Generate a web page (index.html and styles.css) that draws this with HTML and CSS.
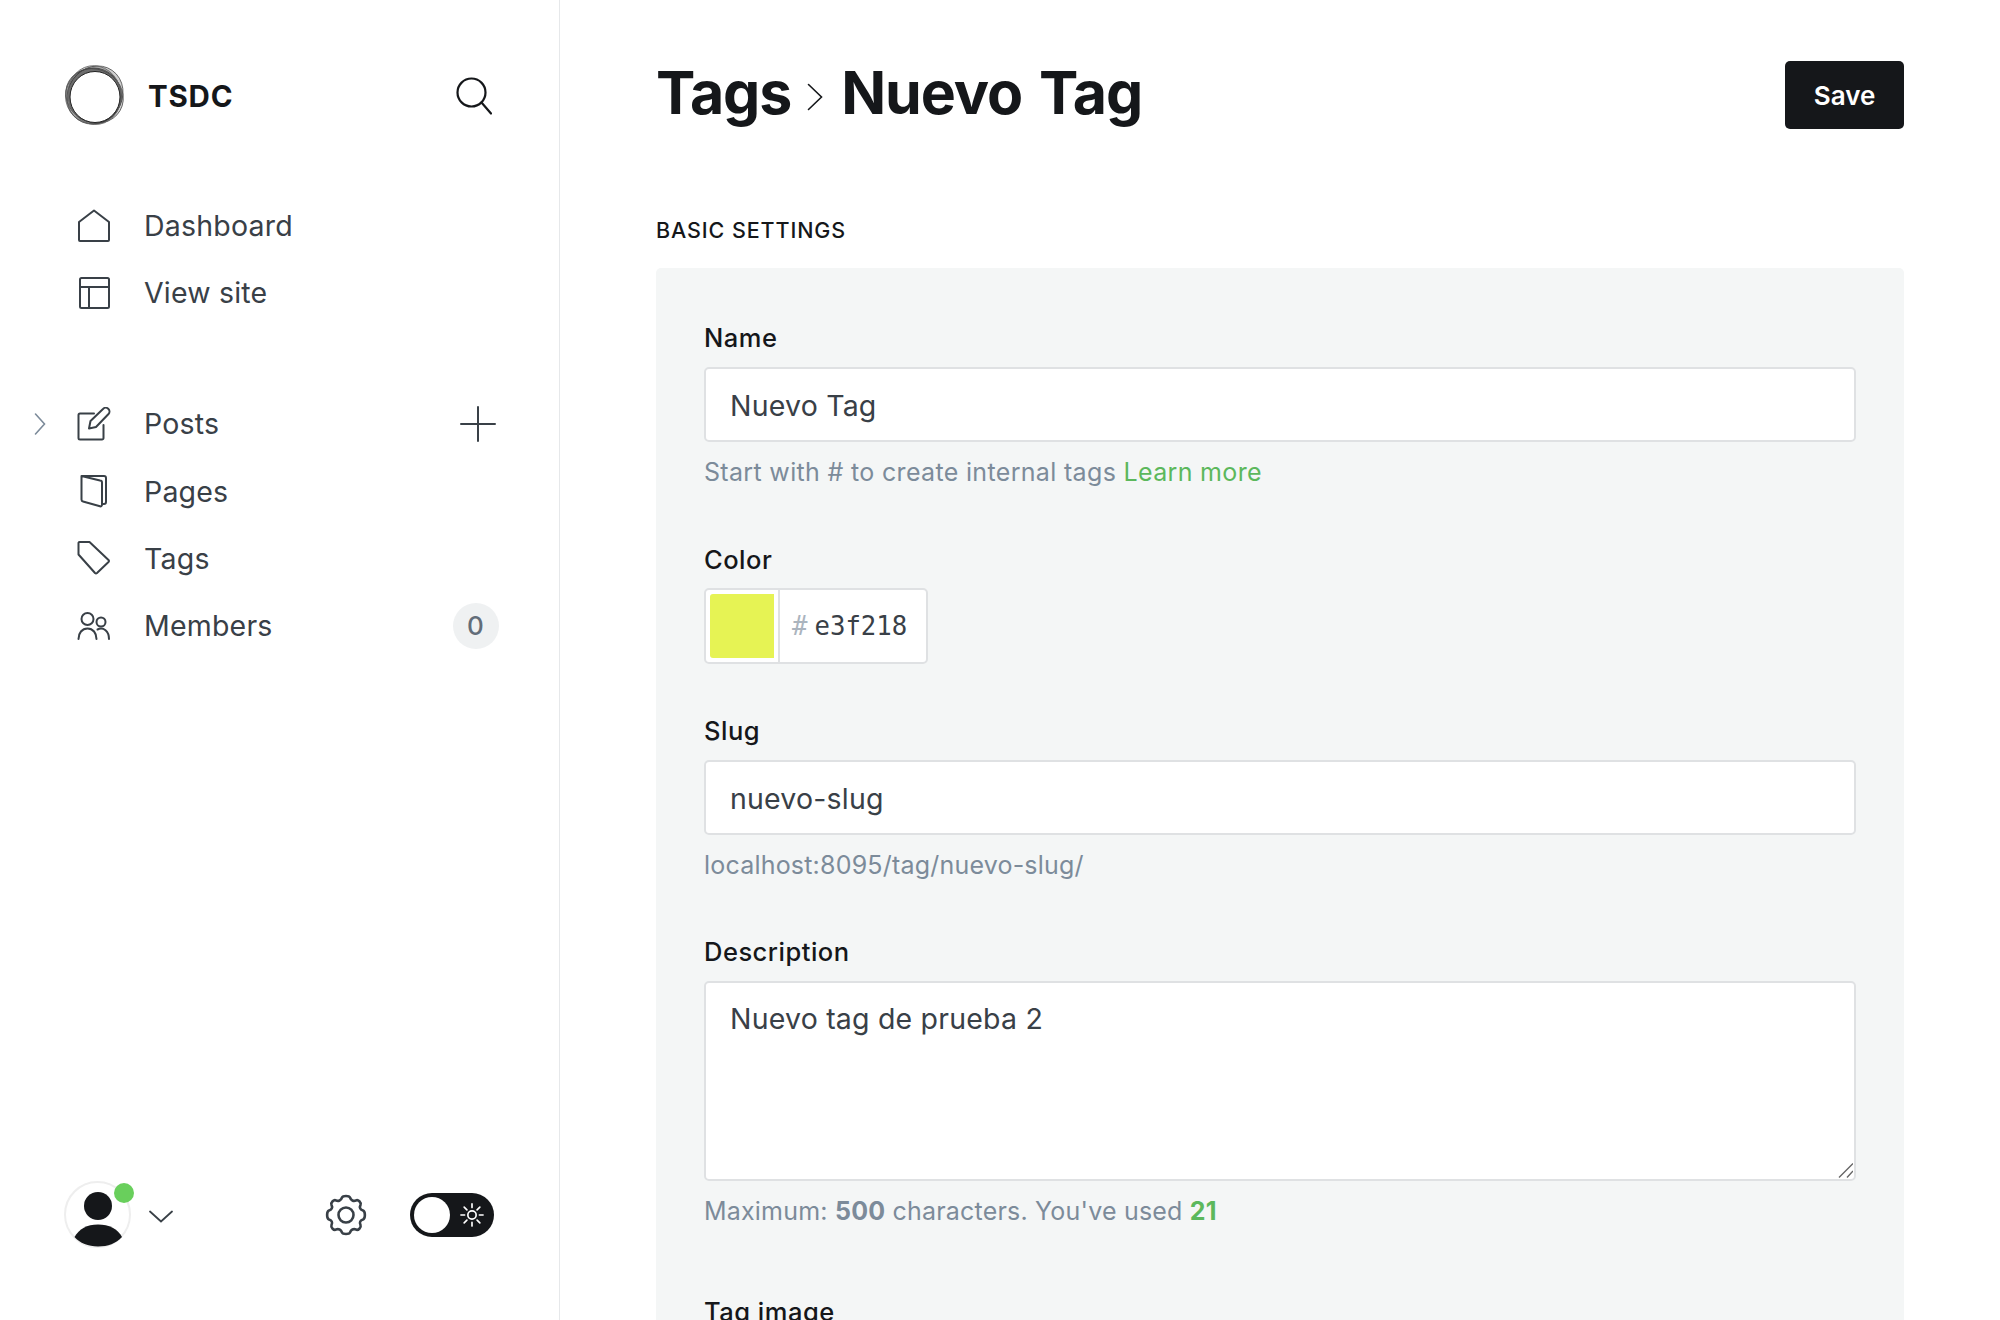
FILE: index.html
```html
<!DOCTYPE html>
<html>
<head>
<meta charset="UTF-8" />
<title>Tags - Nuevo Tag</title>
<link rel="stylesheet" href="styles.css">
</head>
<body>
<div class="app">
	<aside class="sidebar">
		<div class="brand">
			<svg class="logo" viewBox="0 0 60 60" fill="none">
				<ellipse cx="28.500" cy="31" rx="28" ry="28" fill="#000" fill-opacity="0.22" stroke="#555" stroke-width="0.8"/>
				<ellipse cx="30" cy="30" rx="30" ry="27" transform="rotate(-55 30 30)" fill="#000" fill-opacity="0.18" stroke="#555" stroke-width="0.8"/>
				<ellipse cx="30" cy="31" rx="29.500" ry="26.500" transform="rotate(30 30 30)" fill="#000" fill-opacity="0.18" stroke="#555" stroke-width="0.8"/>
				<ellipse cx="30" cy="30.500" rx="29.500" ry="26.500" transform="rotate(80 30 30)" fill="#000" fill-opacity="0.18" stroke="#666" stroke-width="0.8"/>
				<ellipse cx="30" cy="32" rx="25" ry="25.500" fill="#fff" stroke="#222" stroke-width="1"/>
			</svg>
			<span class="brand-name">TSDC</span>
			<svg class="search-icon" viewBox="0 0 36 38" fill="none" stroke="#15171a" stroke-width="2.2" stroke-linecap="round">
				<circle cx="15.5" cy="15.5" r="14"/>
				<path d="M25.5 25.5 L35 36.5"/>
			</svg>
		</div>

		<nav class="nav nav-top">
			<a class="nav-item">
				<svg class="nav-icon" viewBox="0 0 34 34" fill="none" stroke="#394047" stroke-width="2" stroke-linejoin="round">
					<path d="M2 13 L17 1.500 L32 13 V31 a1 1 0 0 1 -1 1 H3 a1 1 0 0 1 -1 -1 Z"/>
				</svg>
				<span>Dashboard</span>
			</a>
			<a class="nav-item">
				<svg class="nav-icon" viewBox="0 0 34 34" fill="none" stroke="#394047" stroke-width="2" stroke-linejoin="round">
					<rect x="3" y="2" width="29" height="30" rx="1.5"/>
					<path d="M3 11 H32 M12 11 V32"/>
				</svg>
				<span>View site</span>
			</a>
		</nav>

		<nav class="nav nav-main">
			<a class="nav-item">
				<svg class="nav-caret" viewBox="0 0 12 24" fill="none" stroke="#7c8b9a" stroke-width="1.6" stroke-linecap="round">
					<path d="M1.5 2 L10.5 12 L1.5 22"/>
				</svg>
				<svg class="nav-icon" viewBox="0 0 34 34" fill="none" stroke="#394047" stroke-width="2" stroke-linejoin="round" stroke-linecap="round">
					<path d="M17 6.5 H3 a1.5 1.5 0 0 0 -1.5 1.5 V31 a1.5 1.5 0 0 0 1.5 1.5 H25 a1.5 1.5 0 0 0 1.5 -1.5 V18"/>
					<path d="M12 21.5 L13.5 14 L26 2 a3 3 0 0 1 5.5 5 L19 20 Z"/>
				</svg>
				<span>Posts</span>
				<svg class="nav-plus" viewBox="0 0 36 36" fill="none" stroke="#394047" stroke-width="2" stroke-linecap="round">
					<path d="M18 1 V35 M1 18 H35"/>
				</svg>
			</a>
			<a class="nav-item">
				<svg class="nav-icon" viewBox="0 0 34 34" fill="none" stroke="#394047" stroke-width="2" stroke-linejoin="round">
					<path d="M5 2 H27 a2 2 0 0 1 2 2 V28 a2 2 0 0 1 -2 2 H25"/>
					<path d="M4.5 2 L23 6.5 a2 2 0 0 1 2 2 V31 a1.5 1.5 0 0 1 -2 1.3 L6 27.5 a2 2 0 0 1 -1.5 -2 Z"/>
				</svg>
				<span>Pages</span>
			</a>
			<a class="nav-item">
				<svg class="nav-icon" viewBox="0 0 34 34" fill="none" stroke="#394047" stroke-width="2" stroke-linejoin="round">
					<path d="M1.500 2 a1 1 0 0 1 1 -1 H12.500 L31.500 19 a1.500 1.500 0 0 1 0 2 L20 32 a1.500 1.500 0 0 1 -2 0 L1.500 13.500 Z"/>
				</svg>
				<span>Tags</span>
			</a>
			<a class="nav-item">
				<svg class="nav-icon" viewBox="0 0 34 34" fill="none" stroke="#394047" stroke-width="2" stroke-linecap="round">
					<circle cx="10.500" cy="10" r="6"/>
					<circle cx="24" cy="13" r="4.500"/>
					<path d="M1.500 30 C1.500 24 5 19.500 10.500 19.500 C16 19.500 19.500 24 19.500 30"/>
					<path d="M20.500 20.500 C26.500 17.500 32 22.500 32 30"/>
				</svg>
				<span>Members</span>
				<span class="count">0</span>
			</a>
		</nav>

		<div class="side-footer">
			<div class="avatar">
				<svg class="avatar-pic" viewBox="0 0 68 68">
					<circle cx="33.5" cy="33.5" r="32.5" fill="#fff" stroke="#eeeeee" stroke-width="2"/>
					<ellipse cx="34" cy="25" rx="14" ry="14" fill="#15171a"/>
					<path d="M10.5 56 C15 48 23 43.5 34 43.5 C45 43.5 54 48 58 56 C52 62.500 44 65.500 34 65.500 C24 65.500 16 62 10.500 56 Z" fill="#15171a"/>
				</svg>
				<span class="avatar-dot"></span>
			</div>
			<svg class="user-caret" viewBox="0 0 24 13" fill="none" stroke="#394047" stroke-width="1.8" stroke-linecap="round">
				<path d="M1 1.500 L12 11.500 L23 1.500"/>
			</svg>
			<svg class="gear" viewBox="0 0 42 42" fill="none" stroke="#394047" stroke-width="2.600" stroke-linejoin="round">
				<circle cx="21" cy="21" r="7.500"/>
				<path d="M17 3.500 C18 1.500 24 1.500 25 3.500 C26 6.500 28.500 7.500 31 6.500 C33 5 36.500 8.500 35.500 11 C34 13.500 35.500 16 38 16.500 C40.500 17.500 40.500 24.500 38 25.500 C35.500 26 34 28.500 35.500 31 C36.500 33.500 33 37 31 35.500 C28.500 34.500 26 35.500 25 38.500 C24 40.500 18 40.500 17 38.500 C16 35.500 13.500 34.500 11 35.500 C9 37 5.500 33.500 6.500 31 C8 28.500 6.500 26 4 25.500 C1.500 24.500 1.500 17.500 4 16.500 C6.500 16 8 13.500 6.500 11 C5.500 8.500 9 5 11 6.500 C13.500 7.500 16 6.500 17 3.500 Z"/>
			</svg>
			<div class="theme-toggle">
				<span class="knob"></span>
				<svg class="sun" viewBox="0 0 26 26" fill="none" stroke="#fff" stroke-width="1.800" stroke-linecap="round">
					<circle cx="13" cy="13" r="4.500"/>
					<path d="M13 1 V5 M13 21 V25 M1 13 H5 M21 13 H25 M4.500 4.500 L7.500 7.500 M18.500 18.500 L21.500 21.500 M4.500 21.500 L7.500 18.500 M18.500 7.500 L21.500 4.500"/>
				</svg>
			</div>
		</div>
	</aside>

	<main class="content">
		<header class="page-head">
			<h1 class="title">
				<span>Tags</span>
				<svg class="crumb" viewBox="0 0 16 28" fill="none" stroke="#15171a" stroke-width="1.600" stroke-linecap="round">
					<path d="M1.500 1.500 L14.500 14 L1.500 26.500"/>
				</svg>
				<span>Nuevo Tag</span>
			</h1>
			<button class="save">Save</button>
		</header>

		<h4 class="section-title">Basic settings</h4>
		<section class="card">
			<div class="field field-name">
				<label>Name</label>
				<div class="input">Nuevo Tag</div>
				<p class="hint">Start with # to create internal tags <a class="link">Learn more</a></p>
			</div>
			<div class="field field-color">
				<label>Color</label>
				<div class="color-input">
					<span class="swatch"></span>
					<span class="hex"><span class="hash">#</span>e3f218</span>
				</div>
			</div>
			<div class="field field-slug">
				<label>Slug</label>
				<div class="input">nuevo-slug</div>
				<p class="hint">localhost:8095/tag/nuevo-slug/</p>
			</div>
			<div class="field field-desc">
				<label>Description</label>
				<div class="input textarea">
					Nuevo tag de prueba 2
					<svg class="grip" viewBox="0 0 15 15" stroke="#666" stroke-width="1.400" fill="none">
						<path d="M1 14.500 L15 0.500 M9 14.500 L15 8"/>
					</svg>
				</div>
				<p class="hint">Maximum: <b>500</b> characters. You've used <b class="used">21</b></p>
			</div>
			<div class="field field-image">
				<label>Tag image</label>
			</div>
		</section>
	</main>
</div>
</body>
</html>
```

FILE: styles.css
```css
* {
	box-sizing: border-box;
}
html, body {
	margin: 0;
	height: 1320px;
	overflow: hidden;
	background: #fff;
}
body {
	font-family: "Inter", "Liberation Sans", sans-serif;
	color: #15171a;
}
.app {
	display: flex;
	height: 1320px;
}

/* sidebar */
.sidebar {
	width: 560px;
	flex: none;
	border-right: 1px solid #e6e8ea;
	padding: 65px 65px 0 0;
	display: flex;
	flex-direction: column;
}
.brand {
	display: flex;
	align-items: center;
	padding-left: 65px;
	height: 60px;
}
.logo {
	width: 60px;
	height: 60px;
	flex: none;
}
.brand-name {
	margin-left: 23px;
	margin-top: 2px;
	font-size: 29.500px;
	font-weight: 700;
	letter-spacing: 0.8px;
}
.search-icon {
	width: 36px;
	height: 38px;
	margin-left: auto;
	margin-right: 2.500px;
	margin-top: 2px;
}
.nav {
	display: flex;
	flex-direction: column;
}
.nav-top {
	margin-top: 67px;
}
.nav-main {
	margin-top: 64px;
}
.nav-item {
	position: relative;
	display: flex;
	align-items: center;
	height: 67.200px;
	padding-left: 77px;
	font-size: 28.500px;
	color: #394047;
	letter-spacing: 0.2px;
}
.nav-icon {
	width: 34px;
	height: 34px;
	margin-right: 33px;
	flex: none;
}
.nav-caret {
	position: absolute;
	left: 34px;
	top: 22px;
	width: 12px;
	height: 24px;
}
.nav-plus {
	width: 36px;
	height: 36px;
	margin-left: auto;
	margin-right: -1.500px;
}
.count {
	margin-left: auto;
	margin-right: -4.500px;
	width: 46px;
	height: 46px;
	border-radius: 50%;
	background: #eff1f2;
	color: #626d79;
	font-size: 26px;
	font-weight: 500;
	display: flex;
	align-items: center;
	justify-content: center;
}
.side-footer {
	margin-top: auto;
	margin-bottom: 71px;
	padding-left: 64px;
	display: flex;
	align-items: center;
}
.avatar {
	position: relative;
	width: 68px;
	height: 68px;
	flex: none;
}
.avatar-pic {
	width: 68px;
	height: 68px;
	display: block;
}
.avatar-dot {
	position: absolute;
	left: 50px;
	top: 2px;
	width: 20px;
	height: 20px;
	border-radius: 50%;
	background: #69cf5c;
}
.user-caret {
	width: 24px;
	height: 13px;
	margin-left: 17px;
	margin-top: 3px;
}
.gear {
	width: 42px;
	height: 42px;
	margin-left: auto;
	margin-right: 43px;
}
.theme-toggle {
	width: 84px;
	height: 44px;
	border-radius: 22px;
	background: #15171a;
	display: flex;
	align-items: center;
	padding: 0 10px 0 4px;
	justify-content: space-between;
}
.knob {
	width: 36px;
	height: 36px;
	border-radius: 50%;
	background: #fff;
}
.sun {
	width: 24px;
	height: 24px;
}

/* main */
.content {
	flex: 1;
	padding: 0 96px;
}
.page-head {
	display: flex;
	align-items: center;
	justify-content: space-between;
	padding-top: 61px;
	height: 129px;
}
.title {
	margin: -4px 0 0;
	font-size: 59px;
	font-weight: 700;
	letter-spacing: -1.1px;
	word-spacing: 4px;
	line-height: 68px;
	display: flex;
	align-items: center;
	gap: 17px;
}
.crumb {
	width: 16px;
	height: 28px;
	margin: 8px 1px 0 -1px;
}
.save {
	width: 119px;
	height: 68px;
	border: 0;
	border-radius: 5px;
	background: #15171a;
	color: #fff;
	font: 600 26px "Inter", sans-serif;
}
.section-title {
	margin: 86px 0 0;
	font-size: 21.500px;
	line-height: 30px;
	font-weight: 500;
	letter-spacing: 0.9px;
	text-transform: uppercase;
}
.card {
	margin-top: 23px;
	background: #f4f6f6;
	border-radius: 5px 5px 0 0;
	padding: 54px 48px 80px 48px;
}
label {
	display: block;
	font-size: 25.500px;
	font-weight: 500;
	line-height: 32px;
	letter-spacing: 0.5px;
	margin-bottom: 13px;
}
.input {
	position: relative;
	height: 75px;
	background: #fff;
	border: 2px solid #dfe1e3;
	border-radius: 5px;
	padding: 2px 24px 0;
	display: flex;
	align-items: center;
	font-size: 28.500px;
	color: #394047;
	letter-spacing: 0.2px;
}
.hint {
	margin: 12px 0 0;
	font-size: 25px;
	line-height: 36px;
	color: #7c8b9a;
	letter-spacing: 0.2px;
}
.field-name .hint {
	letter-spacing: 0.33px;
}
.link {
	color: #5cb85c;
}
.hint b {
	font-weight: 700;
}
.hint .used {
	color: #5cb85c;
}
.field-color {
	margin-top: 54px;
}
.field-color label {
	margin-bottom: 12px;
}
.field-slug {
	margin-top: 51px;
}
.field-desc {
	margin-top: 53px;
}
.field-image {
	margin-top: 67px;
}
.color-input {
	width: 224px;
	height: 76px;
	background: #fff;
	border: 2px solid #dfe1e3;
	border-radius: 5px;
	display: flex;
	align-items: center;
}
.swatch {
	width: 64px;
	height: 64px;
	margin-left: 4px;
	background: #e6f354;
	border-radius: 3px 0 0 3px;
	flex: none;
}
.hex {
	flex: 1;
	height: 100%;
	margin-left: 4px;
	border-left: 2px solid #dfe1e3;
	display: flex;
	align-items: center;
	padding-left: 12px;
	font: 25.700px "DejaVu Sans Mono", monospace;
	color: #394047;
}
.hash {
	color: #abb4be;
	margin-right: 7px;
}
.textarea {
	height: 200px;
	align-items: flex-start;
	padding-top: 18px;
}
.grip {
	position: absolute;
	right: 1px;
	bottom: 1px;
	width: 15px;
	height: 15px;
}
```
